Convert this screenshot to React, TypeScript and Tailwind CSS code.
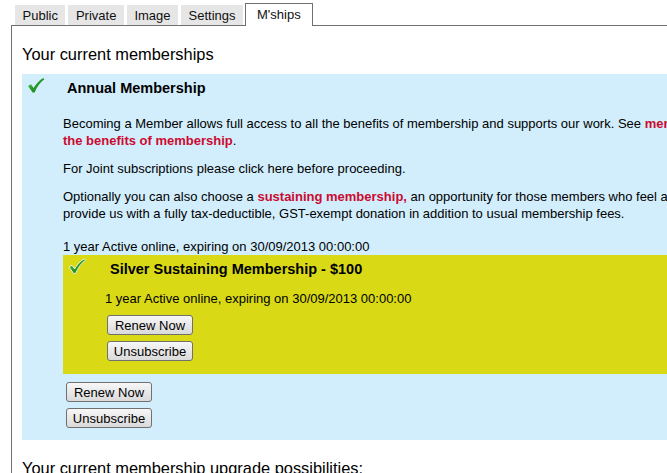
import React from 'react'

const Check = ({ outline = false }: { outline?: boolean }) => (
  <svg width="18" height="17" viewBox="0 0 18 17" className="block">
    <defs>
      <linearGradient id={outline ? 'gy' : 'gb'} x1="0" y1="0" x2="1" y2="1">
        <stop offset="0" stopColor="#7fd67f" />
        <stop offset="0.45" stopColor="#2a9e2a" />
        <stop offset="1" stopColor="#17731a" />
      </linearGradient>
    </defs>
    <path
      d="M1 9 L4 7.2 L6.6 11 C9 6.5 12.5 3 16.3 0.9 L17.4 2.2 C13.2 5.4 10.2 9.5 7.6 15.4 L5.6 15.4 Z"
      fill={`url(#${outline ? 'gy' : 'gb'})`}
      stroke={outline ? '#f4f4e8' : 'none'}
      strokeWidth={outline ? 0.9 : 0}
      strokeLinejoin="round"
    />
  </svg>
)

const Btn = ({ children }: { children: React.ReactNode }) => (
  <button className="flex h-[20px] w-[86px] items-center justify-center rounded-[3px] border border-[#707070] bg-gradient-to-b from-[#f7f7f7] to-[#dadada] text-[13px] leading-none text-black">
    {children}
  </button>
)

const tabs = ['Public', 'Private', 'Image', 'Settings']

export default function App() {
  return (
    <div className="h-[473px] w-[667px] overflow-hidden bg-white font-['Liberation_Sans',Arial,sans-serif] text-[13px] text-black">
      <div className="w-[780px]">
        <div className="flex h-[25px] items-end gap-[3px] pl-[15px]">
          {tabs.map((t) => (
            <div key={t} className="flex h-[20px] items-center bg-[#e6e6e6] px-[7.5px] pt-px text-[13px] text-[#111]">
              {t}
            </div>
          ))}
          <div className="relative z-10 -mb-px ml-[-1px] flex h-[23px] items-center border-x border-t border-[#707070] bg-white px-[11px] text-[13px] text-[#111]">
            M'ships
          </div>
        </div>

        <div className="ml-[11px] border-l border-t border-[#707070] pl-[10px] pt-[18px]">
          <h2 className="text-[16.4px] leading-[20px] font-normal">Your current memberships</h2>

          <div className="mt-[10px] bg-[#d2eefc] pb-[12px] pt-[3px]">
            <div className="flex items-start">
              <div className="ml-[5px]">
                <Check />
              </div>
              <div className="ml-[22px] mt-px text-[14.5px] font-bold leading-[20px]">Annual Membership</div>
            </div>

            <div className="mt-[17px] pl-[41px] leading-[17px] whitespace-nowrap">
              <p>
                Becoming a Member allows full access to all the benefits of membership and supports our work. See{' '}
                <span className="font-bold text-[#cc0a30]">membership levels and</span>
                <br />
                <span className="font-bold text-[#cc0a30]">the benefits of membership</span>.
              </p>
              <p className="mt-[11px]">For Joint subscriptions please click here before proceeding.</p>
              <p className="mt-[11px]">
                Optionally you can also choose a <span className="font-bold text-[#cc0a30]">sustaining membership,</span> an
                opportunity for those members who feel able to
                <br />
                provide us with a fully tax-deductible, GST-exempt donation in addition to usual membership fees.
              </p>
              <p className="mt-[16px]">1 year Active online, expiring on 30/09/2013 00:00:00</p>
            </div>

            <div className="ml-[41px] bg-[#d9d916] pb-[13px] pt-[3px]">
              <div className="flex items-start">
                <div className="ml-[5px]">
                  <Check outline />
                </div>
                <div className="ml-[24px] mt-px text-[14.5px] font-bold leading-[20px]">Silver Sustaining Membership - $100</div>
              </div>
              <p className="mt-[11px] pl-[42px] leading-[17px]">1 year Active online, expiring on 30/09/2013 00:00:00</p>
              <div className="ml-[44px] mt-[8px] flex flex-col gap-[6px]">
                <Btn>Renew Now</Btn>
                <Btn>Unsubscribe</Btn>
              </div>
            </div>

            <div className="ml-[44px] mt-[8px] flex flex-col gap-[6px]">
              <Btn>Renew Now</Btn>
              <Btn>Unsubscribe</Btn>
            </div>
          </div>

          <h2 className="mt-[18px] text-[16.4px] leading-[20px] font-normal">Your current membership upgrade possibilities:</h2>
        </div>
      </div>
    </div>
  )
}
